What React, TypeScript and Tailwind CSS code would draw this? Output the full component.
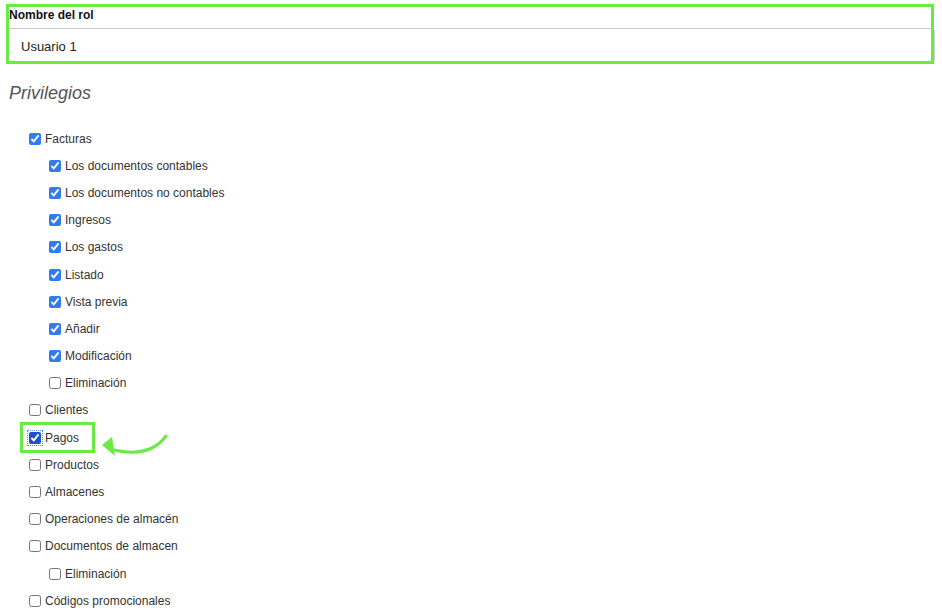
import React from 'react';

type Item = { label: string; checked: boolean; level: 1 | 2; focus?: boolean };

const items: Item[] = [
  { label: 'Facturas', checked: true, level: 1 },
  { label: 'Los documentos contables', checked: true, level: 2 },
  { label: 'Los documentos no contables', checked: true, level: 2 },
  { label: 'Ingresos', checked: true, level: 2 },
  { label: 'Los gastos', checked: true, level: 2 },
  { label: 'Listado', checked: true, level: 2 },
  { label: 'Vista previa', checked: true, level: 2 },
  { label: 'Añadir', checked: true, level: 2 },
  { label: 'Modificación', checked: true, level: 2 },
  { label: 'Eliminación', checked: false, level: 2 },
  { label: 'Clientes', checked: false, level: 1 },
  { label: 'Pagos', checked: true, level: 1, focus: true },
  { label: 'Productos', checked: false, level: 1 },
  { label: 'Almacenes', checked: false, level: 1 },
  { label: 'Operaciones de almacén', checked: false, level: 1 },
  { label: 'Documentos de almacen', checked: false, level: 1 },
  { label: 'Eliminación', checked: false, level: 2 },
  { label: 'Códigos promocionales', checked: false, level: 1 },
];

const Row: React.FC<{ item: Item }> = ({ item }) => {
  const box = (
    <label className="flex items-center h-[27.2px] text-[12px] text-[#333]">
      <input
        type="checkbox"
        defaultChecked={item.checked}
        className={
          item.focus
            ? 'w-[12px] h-[12px] m-0 mr-[4px] accent-[#1f4fd1] outline-1 outline-dotted outline-[#5b8ae6] outline-offset-1'
            : 'w-[12px] h-[12px] m-0 mr-[4px] accent-[#2f7bef]'
        }
      />
      <span>{item.label}</span>
    </label>
  );

  if (item.focus) {
    return (
      <div className={item.level === 1 ? 'pl-[29px] relative' : 'pl-[49px] relative'}>
        {box}
        <div className="absolute left-[20px] top-[-2px] w-[75px] h-[31px] border-[3px] border-[#6aea45] pointer-events-none" />
        <svg className="absolute left-[96px] top-[6px]" width="80" height="30" viewBox="96 426 80 30">
          <path d="M166 432 Q150 454 114 446" fill="none" stroke="#6aea45" strokeWidth="3" strokeLinecap="round" />
          <path d="M102 441 L112 433 L115 452 Z" fill="#6aea45" />
        </svg>
      </div>
    );
  }

  return <div className={item.level === 1 ? 'pl-[29px]' : 'pl-[49px]'}>{box}</div>;
};

export default function App() {
  return (
    <div className="w-[942px] h-[612px] overflow-hidden bg-white font-['Liberation_Sans',Arial,sans-serif]">
      <div className="pt-[4px] pl-[6px] pr-[8px]">
        <div className="border-[3px] border-[#6aea45] h-[60px] relative">
          <div className="h-[22px] border-b border-[#c8c8c8] pt-[1px] text-[12px] leading-[14px] font-bold text-[#111]">
            Nombre del rol
          </div>
          <div className="h-[32px] flex items-center pl-[12px] pt-[3px] text-[13px] text-[#222]">Usuario 1</div>
          <div className="absolute right-[-4px] top-[23px] h-[31px] w-px bg-[#cfcfcf]" />
        </div>
      </div>
      <div className="pl-[9px] pt-[18px] text-[18px] italic text-[#555] leading-[22px]">Privilegios</div>
      <div className="pt-[21px]">
        {items.map((it, i) => (
          <Row key={i} item={it} />
        ))}
      </div>
    </div>
  );
}
